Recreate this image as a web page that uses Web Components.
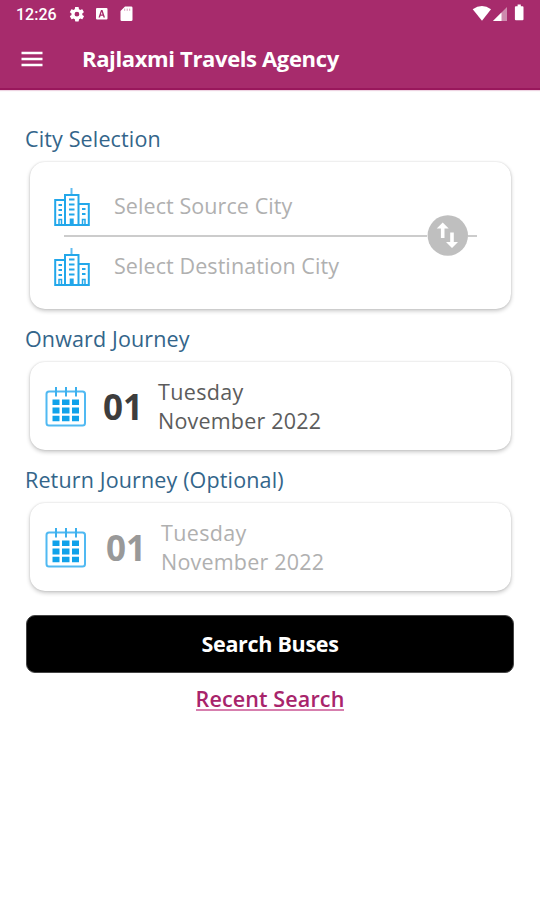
<!DOCTYPE html>
<html lang="en">
<head>
<meta charset="utf-8">
<title>Rajlaxmi Travels Agency</title>
<style>
html,body{margin:0;background:#fff}
body{width:540px;height:900px;overflow:hidden;font-family:"Open Sans","Noto Sans",sans-serif}
</style>
</head>
<body>
<travel-app></travel-app>
<script>
const define = (name, html) => customElements.define(name, class extends HTMLElement {
  constructor() {
    super();
    const t = document.createElement('template');
    t.innerHTML = html;
    this.attachShadow({mode: 'open'}).append(t.content.cloneNode(true));
  }
});

define('status-bar', `<style>
:host{display:flex;height:28px;box-sizing:border-box;padding:0 14px 0 16px;align-items:center;justify-content:space-between;color:#fff;font:500 16px Roboto,sans-serif}
.l,.r{display:flex;align-items:center}
time{width:41px;margin-right:12px;white-space:nowrap}
svg{display:block}
</style>
<div class="l"><time>12:26</time>
<svg width="88" height="28" viewBox="69 0 88 28" fill="#fff">
<g transform="translate(68.3 5.6) scale(.72)"><path fill-rule="evenodd" d="M19.4 13c.1-.3.1-.7.1-1s0-.7-.1-1l2.100-1.600c.2-.2.2-.4.100-.6l-2-3.500c-.1-.2-.4-.3-.6-.2l-2.500 1c-.5-.4-1.100-.7-1.700-1l-.4-2.600c0-.3-.2-.5-.5-.5h-4c-.3 0-.5.2-.5.4l-.4 2.700c-.6.2-1.200.6-1.700 1l-2.500-1c-.2-.1-.5 0-.6.2l-2 3.500c-.1.2-.1.500.1.600L4.500 11c0 .3-.1.700-.1 1s0 .7.1 1l-2.100 1.600c-.2.200-.2.400-.1.600l2 3.500c.1.200.4.300.6.200l2.500-1c.5.400 1.100.7 1.700 1l.4 2.600c0 .3.200.5.500.5h4c.3 0 .5-.2.500-.5l.4-2.600c.6-.2 1.200-.6 1.700-1l2.500 1c.2.100.5 0 .6-.2l2-3.500c.1-.2.1-.4-.1-.6zM12 15.300a3.300 3.300 0 1 1 0-6.600a3.300 3.300 0 0 1 0 6.600z"/></g>
<path fill-rule="evenodd" d="M97 8h9.500a1 1 0 0 1 1 1v9.500a1 1 0 0 1-1 1H97a1 1 0 0 1-1-1V9a1 1 0 0 1 1-1zM101 10L98.500 17.500h1.500l.5-1.700h2.500l.5 1.700h1.500L102.500 10zM101.700 11.800l.8 2.700h-1.600z"/>
<path d="M125 6.500h6.200a1.300 1.300 0 0 1 1.300 1.300v11.900a1.300 1.300 0 0 1-1.300 1.300h-9.400a1.300 1.300 0 0 1-1.300-1.300V11z"/><path d="M124.700 8.600v2.200M127.200 8.600v2.200M129.700 8.600v2.200" stroke="#d79ab9" stroke-width="1"/>
</svg></div>
<div class="r"><svg width="54" height="28" viewBox="472 0 54 28" fill="#fff">
<path d="M472.700 9.200Q482 2.800 491 9.200L482 20.700z"/>
<path d="M507 7v14h-14z" opacity=".45"/><path d="M501.500 12.500V21H493z"/>
<path d="M517.600 4.500h3.200v1.800h1.700a1 1 0 0 1 1 1v12a1 1 0 0 1-1 1h-6.600a1 1 0 0 1-1-1v-12a1 1 0 0 1 1-1h1.700z"/></svg></div>`);

define('app-header', `<style>
:host{display:block;height:90px;box-sizing:border-box;background:#a72b6c;border-bottom:2px solid #99175c;box-shadow:0 1px 1px #eed4e2}
.bar{display:flex;align-items:center;height:62px;padding-left:21px;gap:39px}
h1{margin:0 0 2px;color:#fff;font-size:22px;letter-spacing:-.36px;font-weight:700;white-space:nowrap}
svg{display:block}
</style><status-bar></status-bar>
<div class="bar"><svg width="22" height="16" viewBox="0 0 22 16"><path d="M.5 2h21M.5 8h21M.5 14h21" stroke="#fff" stroke-width="2.300"/></svg><h1><slot></slot></h1></div>`);

define('section-label', `<style>
:host{display:block;height:30px;line-height:30px;color:#33658a;font-size:21.500px;letter-spacing:.14px;white-space:nowrap;margin-left:25px}
</style><slot></slot>`);

define('soft-card', `<style>
:host{display:block;box-sizing:border-box;margin:8px 29px 15px 30px;background:#fff;border-radius:15px;box-shadow:0 2px 4px rgba(0,0,0,.22),0 0 2px rgba(0,0,0,.14)}
</style><slot></slot>`);

define('city-icon', `<style>:host{display:block;width:36px;height:40px}svg{display:block}</style>
<svg width="36" height="40" viewBox="0 0 36 40" fill="none" stroke="#22a7ea" stroke-width="2">
<path d="M17.500 1v7" stroke="#62bdf0"/><path d="M11 38V8h13.500v30M11 13H1.200v25H34.800V17H24.500"/>
<path d="M15 12.500h5.500M15 17.500h5.500M15 22.500h5.500M15 27.500h5.500M4.500 18h3.500M4.500 23h3.500M4.500 28h3.500M28 22h3.500M28 27h3.500" stroke-width="1.900"/>
<path d="M17.700 31.500V38" stroke-width="4"/><path d="M5 38v-5.500h2.500V38M28.500 38v-5.500H31V38" stroke-width="1.500"/></svg>`);

define('calendar-icon', `<style>:host{display:block;width:42px;height:40px}svg{display:block}</style>
<svg width="42" height="40" viewBox="0 0 42 40"><rect x="1.500" y="4.500" width="38.500" height="34" rx="2.500" fill="none" stroke="#50b9f2" stroke-width="2"/>
<path d="M11 0v9.500M21 0v9.500M31 0v9.500" stroke="#3cb0ee" stroke-width="2"/>
<path fill="#10a2ea" d="M7.500 12.500h7v5.500h-7zM17 12.500h7.500v5.500H17zM27 12.500h7v5.500h-7zM7.500 20.500h7v6h-7zM17 20.500h7.500v6H17zM27 20.500h7v6h-7zM7.500 28.700h7v5.500h-7zM17 28.700h7.500v5.500H17zM27 28.700h7v5.500h-7z"/></svg>`);

define('city-field', `<style>
:host{display:flex;align-items:center;gap:24px;height:44px;color:#b0b0b0;font-size:21.500px;letter-spacing:.08px;white-space:nowrap}
city-icon{margin-top:1px}
span{margin-bottom:2px}
</style><city-icon></city-icon><span><slot></slot></span>`);

define('swap-divider', `<style>
:host{display:flex;align-items:center;height:16px}
i{height:2px;background:#ccc}
.a{flex:1}.b{width:9px}
svg{display:block;width:41px;height:41px;margin:-14px 0 -12px}
</style><i class="a"></i>
<svg viewBox="0 0 41 41"><circle cx="20.800" cy="20.500" r="20.200" fill="#bfbfbf"/><path fill="#fff" d="M15.700 7.500l6 6h-4.200v9.500h-3.600v-9.500H9.700zM23.200 17.500h3.600v9.500h4.200l-6 6-6-6h4.200z"/></svg><i class="b"></i>`);

define('city-picker', `<style>
:host{display:block;height:147px;box-sizing:border-box;padding:22px 24px 0}
swap-divider{margin:0 10px}
</style>
<city-field>Select Source City</city-field><swap-divider></swap-divider><city-field>Select Destination City</city-field>`);

define('date-field', `<style>
:host{display:flex;align-items:center;height:88px;box-sizing:border-box;padding:1px 0 0 15px;color:#5c5c5c;white-space:nowrap}
b{font-size:35px;line-height:40px;width:38px;margin-left:var(--inset,16px);color:var(--day,#3d3d3d)}
.t{margin:0 0 2px 17px;font-size:21.500px;line-height:29px}
.w{letter-spacing:.35px}.m{letter-spacing:.2px}
</style><calendar-icon></calendar-icon><b><slot name="day"></slot></b>
<div class="t"><div class="w"><slot name="weekday"></slot></div><div class="m"><slot name="month"></slot></div></div>`);

define('search-button', `<style>
:host{display:flex;align-items:center;justify-content:center;margin:24px 26px 0;height:58px;box-sizing:border-box;padding-bottom:2px;background:#000;border:1px solid #444;border-radius:9px;color:#fff;font-size:21.500px;letter-spacing:-.3px;font-weight:700}
</style><span><slot></slot></span>`);

define('recent-link', `<style>
:host{display:flex;justify-content:center;margin-top:11px;height:30px;line-height:30px;color:#a8246b;font-size:21.500px;letter-spacing:.13px;font-weight:600}
span{height:25px;border-bottom:2px solid #d77fae;line-height:30px}
</style><span><slot></slot></span>`);

define('travel-app', `<style>
:host{display:block;width:540px;height:900px;background:#fff}
main{display:block;padding-top:34px}
soft-card:last-of-type{margin-bottom:0}
.off{color:#b0b0b0;--day:#999;--inset:19px}
</style>
<app-header>Rajlaxmi Travels Agency</app-header>
<main>
<section-label>City Selection</section-label>
<soft-card><city-picker></city-picker></soft-card>
<section-label>Onward Journey</section-label>
<soft-card><date-field><span slot="day">01</span><span slot="weekday">Tuesday</span><span slot="month">November 2022</span></date-field></soft-card>
<section-label>Return Journey (Optional)</section-label>
<soft-card><date-field class="off"><span slot="day">01</span><span slot="weekday">Tuesday</span><span slot="month">November 2022</span></date-field></soft-card>
<search-button>Search Buses</search-button>
<recent-link>Recent Search</recent-link>
</main>`);
</script>
</body>
</html>
